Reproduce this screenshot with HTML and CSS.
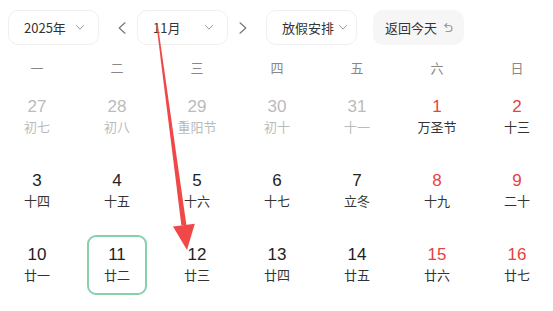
FILE: index.html
```html
<!DOCTYPE html>
<html lang="zh-CN">
<head>
    <meta charset="UTF-8">
    <meta name="viewport" content="width=device-width, initial-scale=1.0">
    <title>万年历</title>
    <link rel="stylesheet" href="styles.css">
</head>
<body>
    <div class="page">
        <div class="toolbar">
            <div class="select year">
                <span>2025年</span>
                <svg class="caret" width="8" height="5" viewBox="0 0 8 5"><path d="M0.5 0.5 L4 4.2 L7.5 0.5" /></svg>
            </div>
            <svg class="nav prev" width="8" height="12" viewBox="0 0 8 12"><path d="M7 0.8 L1.2 6 L7 11.2" /></svg>
            <div class="select month">
                <span>11月</span>
                <svg class="caret" width="8" height="5" viewBox="0 0 8 5"><path d="M0.5 0.5 L4 4.2 L7.5 0.5" /></svg>
            </div>
            <svg class="nav next" width="8" height="12" viewBox="0 0 8 12"><path d="M1 0.8 L6.8 6 L1 11.2" /></svg>
            <div class="select holiday">
                <span>放假安排</span>
                <svg class="caret" width="8" height="5" viewBox="0 0 8 5"><path d="M0.5 0.5 L4 4.2 L7.5 0.5" /></svg>
            </div>
            <div class="today-btn">
                <span>返回今天</span>
                <svg class="undo" width="10" height="10" viewBox="0 0 10 10"><path d="M2 2.5 H6 A3 3 0 0 1 6 8.5 H3" /><path d="M3.8 0.7 L1.8 2.5 L3.8 4.3" /></svg>
            </div>
        </div>

        <div class="weekdays">
            <div>一</div>
            <div>二</div>
            <div>三</div>
            <div>四</div>
            <div>五</div>
            <div>六</div>
            <div>日</div>
        </div>

        <div class="days">
            <div class="day other"><span class="num">27</span><span class="lunar">初七</span></div>
            <div class="day other"><span class="num">28</span><span class="lunar">初八</span></div>
            <div class="day other"><span class="num">29</span><span class="lunar">重阳节</span></div>
            <div class="day other"><span class="num">30</span><span class="lunar">初十</span></div>
            <div class="day other"><span class="num">31</span><span class="lunar">十一</span></div>
            <div class="day weekend"><span class="num">1</span><span class="lunar">万圣节</span></div>
            <div class="day weekend"><span class="num">2</span><span class="lunar">十三</span></div>

            <div class="day"><span class="num">3</span><span class="lunar">十四</span></div>
            <div class="day"><span class="num">4</span><span class="lunar">十五</span></div>
            <div class="day"><span class="num">5</span><span class="lunar">十六</span></div>
            <div class="day"><span class="num">6</span><span class="lunar">十七</span></div>
            <div class="day"><span class="num">7</span><span class="lunar">立冬</span></div>
            <div class="day weekend"><span class="num">8</span><span class="lunar">十九</span></div>
            <div class="day weekend"><span class="num">9</span><span class="lunar">二十</span></div>

            <div class="day"><span class="num">10</span><span class="lunar">廿一</span></div>
            <div class="day selected"><span class="num">11</span><span class="lunar">廿二</span></div>
            <div class="day"><span class="num">12</span><span class="lunar">廿三</span></div>
            <div class="day"><span class="num">13</span><span class="lunar">廿四</span></div>
            <div class="day"><span class="num">14</span><span class="lunar">廿五</span></div>
            <div class="day weekend"><span class="num">15</span><span class="lunar">廿六</span></div>
            <div class="day weekend"><span class="num">16</span><span class="lunar">廿七</span></div>
        </div>

        <!-- annotation arrow drawn over the calendar -->
        <svg class="annotation" width="553" height="311" viewBox="0 0 553 311">
            <polygon points="156.3,24.1 157.7,23.9 186.4,224.9 181.4,225.5" />
            <polygon points="173,226.6 194.8,223.8 187,250" />
        </svg>
    </div>
</body>
</html>
```

FILE: styles.css
```css
* {
    box-sizing: border-box;
    margin: 0;
    padding: 0;
}

html, body {
    overflow: hidden;
}

body {
    font-family: "Noto Sans CJK SC", "Liberation Sans", sans-serif;
    background-color: #fff;
    color: #222;
}

.page {
    position: relative;
    width: 553px;
    height: 311px;
}

.toolbar {
    display: flex;
    align-items: center;
    padding: 10px 0 0 8px;
    height: 45px;
    font-size: 13px;
}

.select {
    display: flex;
    align-items: center;
    justify-content: space-between;
    width: 91px;
    height: 35px;
    padding: 0 14px 0 15px;
    border: 1px solid #efefef;
    border-radius: 10px;
    color: #333;
}

.holiday {
    padding-right: 9px;
}

.caret path,
.nav path,
.undo path {
    fill: none;
    stroke-linecap: round;
    stroke-linejoin: round;
}

.caret path {
    stroke: #999;
    stroke-width: 1;
}

.nav path {
    stroke: #777;
    stroke-width: 1.2;
}

.prev {
    margin: 0 11px 0 19px;
}

.next {
    margin: 0 19px 0 11px;
}

.today-btn {
    display: flex;
    align-items: center;
    justify-content: space-between;
    width: 91px;
    height: 35px;
    margin-left: 16px;
    padding: 0 11px 0 12px;
    border-radius: 10px;
    background-color: #f6f6f6;
    color: #333;
}

.undo path {
    stroke: #999;
    stroke-width: 1.1;
}

.weekdays,
.days {
    display: grid;
    grid-template-columns: repeat(7, 80px);
    margin-left: -3px;
}

.weekdays {
    margin-top: 13px;
    font-size: 13px;
    line-height: 20px;
    color: #888;
    text-align: center;
}

.days {
    margin-top: 9px;
    row-gap: 14px;
}

.day {
    display: flex;
    flex-direction: column;
    align-items: center;
    justify-content: center;
    width: 60px;
    height: 60px;
    margin: 0 auto;
    border: 2px solid transparent;
    border-radius: 9px;
}

.num {
    font-family: "Liberation Sans", "Noto Sans CJK SC", sans-serif;
    font-size: 17px;
    line-height: 20px;
    color: #222;
}

.lunar {
    font-size: 13px;
    line-height: 20px;
    color: #333;
}

.other .num,
.other .lunar {
    color: #bbb;
}

.weekend .num {
    color: #e8413f;
}

.selected {
    border-color: #86d1ad;
}

.annotation {
    position: absolute;
    top: 0;
    left: 0;
    pointer-events: none;
}

.annotation polygon {
    fill: #f04848;
}
```
